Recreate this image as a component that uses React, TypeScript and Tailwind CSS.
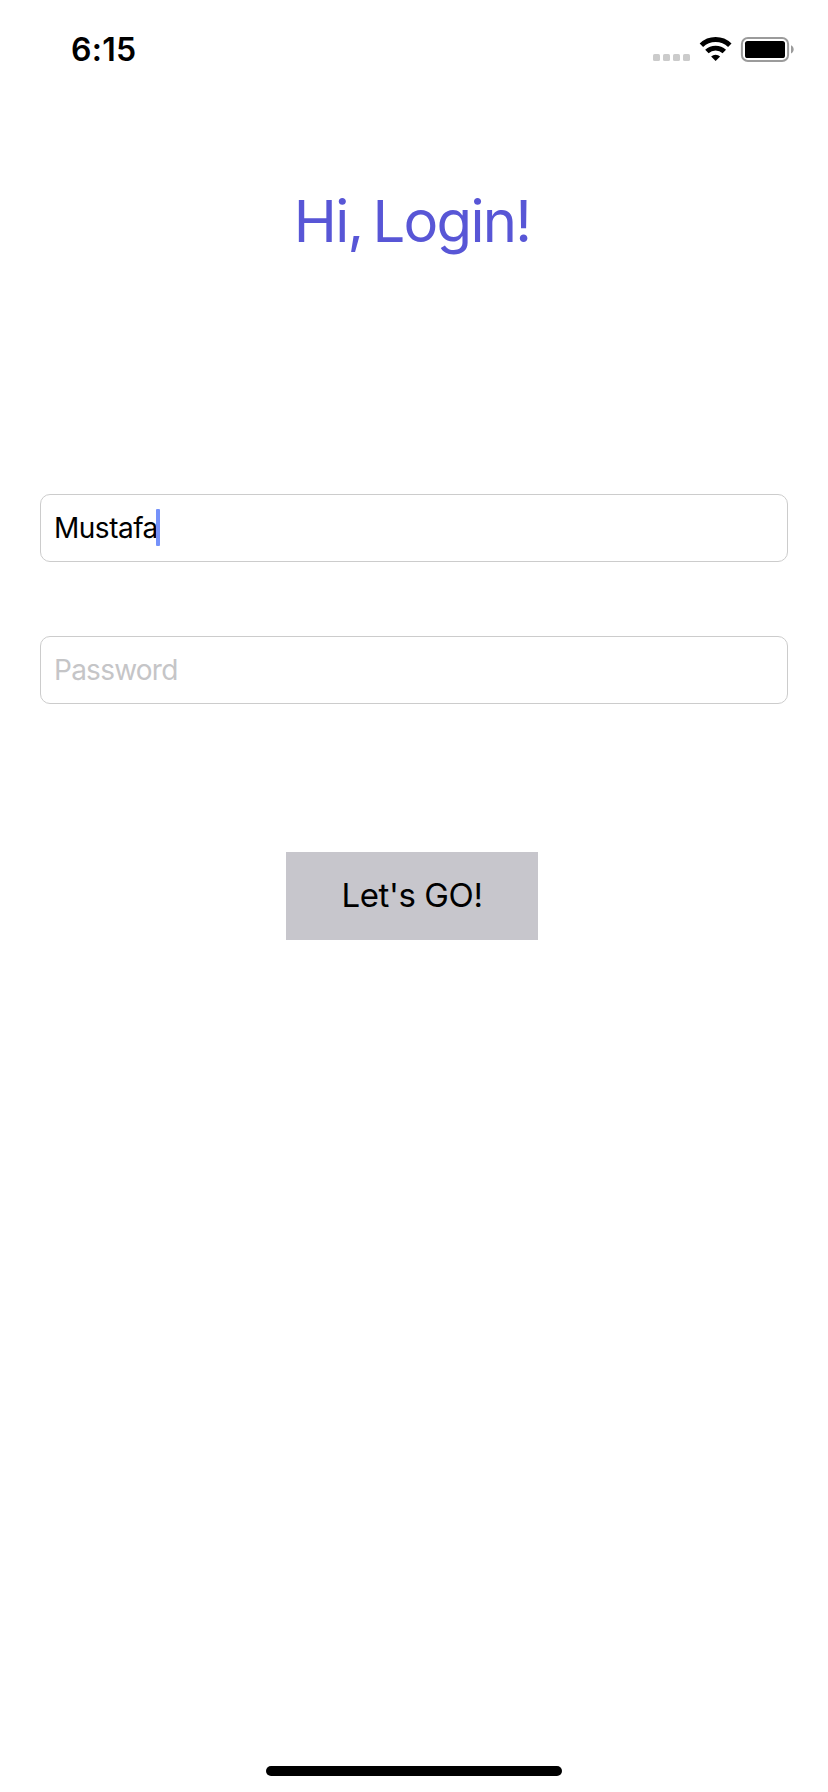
function StatusIcons() {
  return (
    <svg className="block h-[100px] w-[160px]" viewBox="640 0 160 100" aria-hidden="true">
      <g fill="#cbcbcb">
        <rect x="653" y="54" width="7" height="7" rx="1.6" />
        <rect x="663" y="54" width="7" height="7" rx="1.6" />
        <rect x="673" y="54" width="7" height="7" rx="1.6" />
        <rect x="683" y="54" width="7" height="7" rx="1.6" />
      </g>
      <g fill="none" stroke="#000" strokeWidth="4.9">
        <path d="M701.4 45.3A20.3 20.3 0 0 1 729.8 45.3" />
        <path d="M706.9 51.6A12.5 12.5 0 0 1 724.3 51.6" />
      </g>
      <path d="M715.6 61L711.1 56.5A6.4 6.4 0 0 1 720.1 56.5Z" />
      <rect x="741.9" y="38" width="46.2" height="23" rx="6" fill="none" stroke="#9b9b9b" strokeWidth="2" />
      <rect x="745" y="41" width="40" height="17" rx="2.6" />
      <path d="M791 45.3C794.6 46.9 794.6 51.9 791 53.5Z" fill="#9b9b9b" />
    </svg>
  );
}

export default function App() {
  return (
    <div className="flex h-[1792px] w-[828px] flex-col bg-white font-['Inter','Noto_Sans',sans-serif] text-black">
      <header className="flex h-[100px] justify-between pr-7 pl-[71px]">
        <time className="text-[32px] leading-[100px] font-semibold tracking-[0.25px]">6:15</time>
        <StatusIcons />
      </header>

      <main className="flex flex-1 flex-col px-10 pt-[86px]">
        <h1 className="pr-1 text-center text-[58px] leading-[70px] tracking-[-1.75px] text-[#5856d6] [word-spacing:-4.5px]">
          Hi, Login!
        </h1>

        <div className="mt-[238px] flex h-[68px] items-center rounded-[10px] border border-[#cccccc] pl-[13px] text-[28px]">
          <span className="tracking-[-0.5px]">Mustafa</span>
          <span className="mb-[2px] -ml-[2px] h-[37px] w-1 rounded-[1px] bg-[#7592fa]" />
        </div>

        <div className="mt-[74px] flex h-[68px] items-center rounded-[10px] border border-[#cccccc] pl-[13px] text-[28px] text-[#c5c5c7]">
          <span className="tracking-[-0.75px]">Password</span>
        </div>

        <button className="mt-[148px] ml-[246px] h-[88px] w-[252px] bg-[#c7c6cc] pb-[2px] text-[33px] leading-[86px] tracking-[-0.4px]">
          Let's GO!
        </button>
      </main>

      <div className="mx-auto mb-4 h-[10px] w-[296px] rounded-full bg-black" />
    </div>
  );
}
